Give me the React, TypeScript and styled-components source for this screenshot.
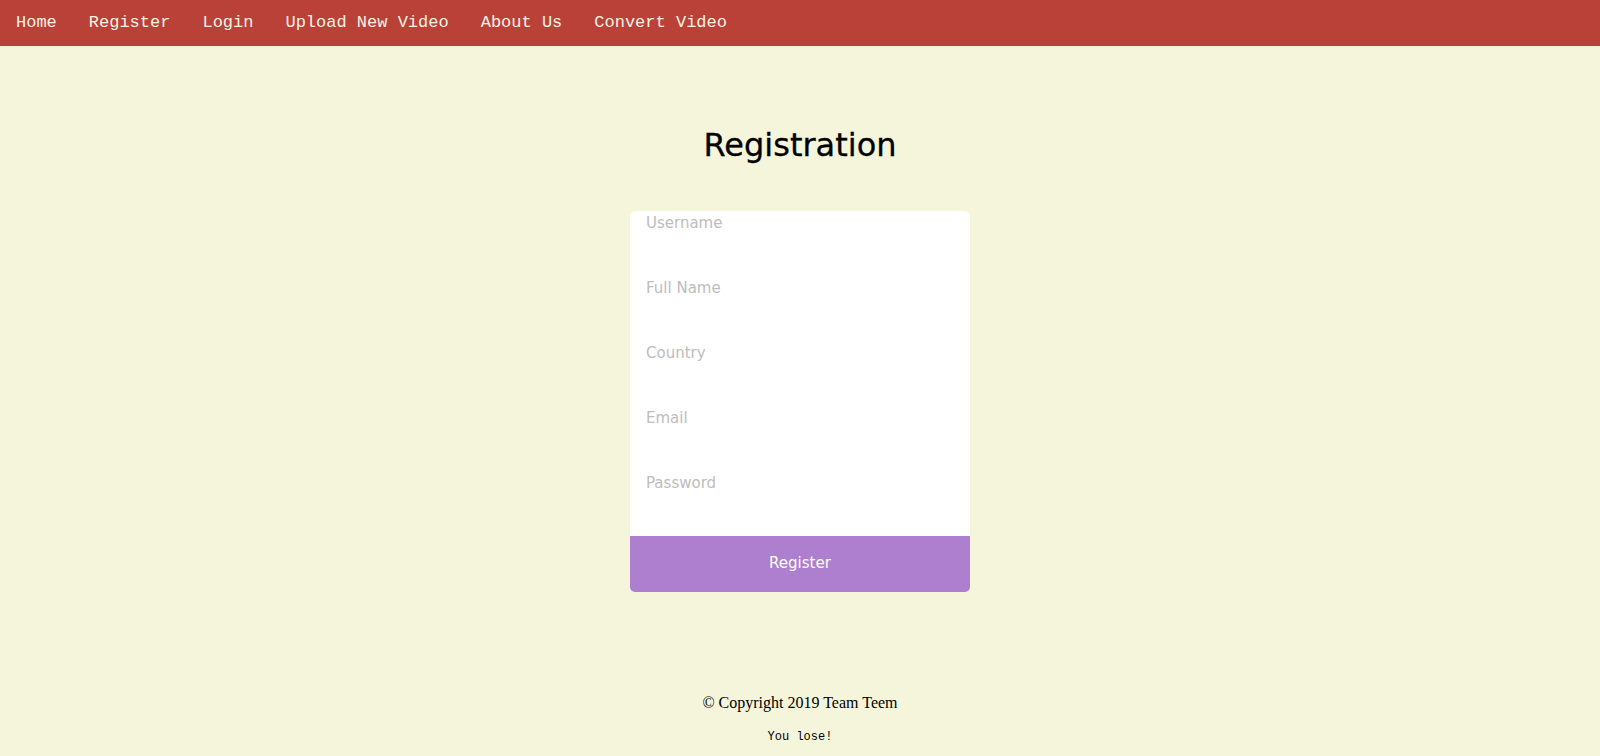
import React from "react";
import styled, { createGlobalStyle } from "styled-components";

const GlobalStyle = createGlobalStyle`
  html, body {
    margin: 0;
    padding: 0;
    background: #f5f5dc;
  }
  * { box-sizing: border-box; }
`;

const Nav = styled.nav`
  height: 46px;
  background: #b94137;
  display: flex;
  align-items: center;
`;

const NavLink = styled.a`
  font-family: "Liberation Mono", "Courier New", monospace;
  font-size: 17px;
  color: #faf2e4;
  text-decoration: none;
  padding: 0 16px;
  line-height: 46px;
  cursor: pointer;
`;

const Main = styled.main`
  display: flex;
  flex-direction: column;
  align-items: center;
  padding-top: 80px;
`;

const Title = styled.h1`
  margin: 0;
  font-family: "DejaVu Sans", sans-serif;
  font-weight: normal;
  font-size: 32px;
  color: #000;
  -webkit-text-stroke: 0.3px #000;
`;

const Card = styled.form`
  margin-top: 47px;
  width: 340px;
  background: #fff;
  border-radius: 5px;
  overflow: hidden;
  display: flex;
  flex-direction: column;
`;

const Field = styled.input`
  height: 24px;
  margin: 0 0 41px 0;
  border: none;
  outline: none;
  padding: 0 16px;
  font-family: "DejaVu Sans", sans-serif;
  font-size: 15px;
  background: transparent;
  color: #333;
  &::placeholder {
    color: #bdbdbd;
  }
`;

const Submit = styled.button`
  height: 56px;
  border: none;
  background: #ad7fce;
  color: #fff;
  font-family: "DejaVu Sans", sans-serif;
  font-size: 15px;
  padding: 0 0 2px 0;
  cursor: pointer;
`;

const Footer = styled.footer`
  margin-top: 102px;
  display: flex;
  flex-direction: column;
  align-items: center;
`;

const Copyright = styled.p`
  margin: 0;
  font-family: "Liberation Serif", "Times New Roman", serif;
  font-size: 16px;
  line-height: 18px;
  color: #000;
`;

const Tagline = styled.code`
  margin-top: 18px;
  font-family: "Liberation Mono", "Courier New", monospace;
  font-size: 12px;
  line-height: 14px;
  color: #000;
`;

const links = ["Home", "Register", "Login", "Upload New Video", "About Us", "Convert Video"];
const fields = [
  { name: "username", placeholder: "Username", type: "text" },
  { name: "fullname", placeholder: "Full Name", type: "text" },
  { name: "country", placeholder: "Country", type: "text" },
  { name: "email", placeholder: "Email", type: "email" },
  { name: "password", placeholder: "Password", type: "password" },
];

export default function App() {
  return (
    <>
      <GlobalStyle />
      <Nav>
        {links.map((l) => (
          <NavLink key={l}>{l}</NavLink>
        ))}
      </Nav>
      <Main>
        <Title>Registration</Title>
        <Card onSubmit={(e) => e.preventDefault()}>
          {fields.map((f) => (
            <Field key={f.name} name={f.name} type={f.type} placeholder={f.placeholder} />
          ))}
          <Submit type="submit">Register</Submit>
        </Card>
        <Footer>
          <Copyright>© Copyright 2019 Team Teem</Copyright>
          <Tagline>You lose!</Tagline>
        </Footer>
      </Main>
    </>
  );
}
